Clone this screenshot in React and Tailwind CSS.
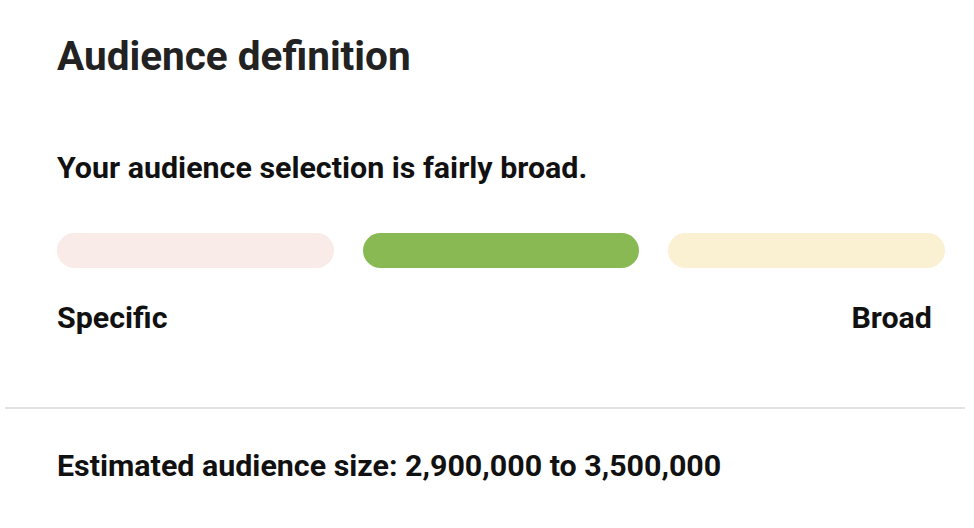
export default function App() {
  return (
    <div className="w-[974px] h-[528px] bg-white overflow-hidden" style={{ fontFamily: 'Roboto, "Liberation Sans", sans-serif' }}>
      <section className="px-[57px] pt-[32px]">
        <h1 className="text-[40.5px] leading-[48px] font-bold text-[#222222]">Audience definition</h1>
        <p className="mt-[72px] text-[30.4px] leading-[32px] font-bold text-[#111111]">Your audience selection is fairly broad.</p>

        <div className="mt-[49px] w-[888px] flex gap-[29px]">
          <div className="flex-1 h-[35px] rounded-full bg-[#f8ebe8]" />
          <div className="flex-1 h-[35px] rounded-full bg-[#89b953]" />
          <div className="flex-1 h-[35px] rounded-full bg-[#faf0d2]" />
        </div>

        <div className="mt-[34px] w-[875px] flex justify-between text-[30.4px] leading-[32px] font-bold text-[#111111]">
          <span>Specific</span>
          <span>Broad</span>
        </div>
      </section>

      <div className="mt-[73px] ml-[5px] w-[960px] h-[2px] bg-[#e2e2e2]" />

      <p className="mt-[41px] px-[57px] text-[30.4px] leading-[32px] font-bold text-[#111111]">
        Estimated audience size: 2,900,000 to 3,500,000
      </p>
    </div>
  );
}
